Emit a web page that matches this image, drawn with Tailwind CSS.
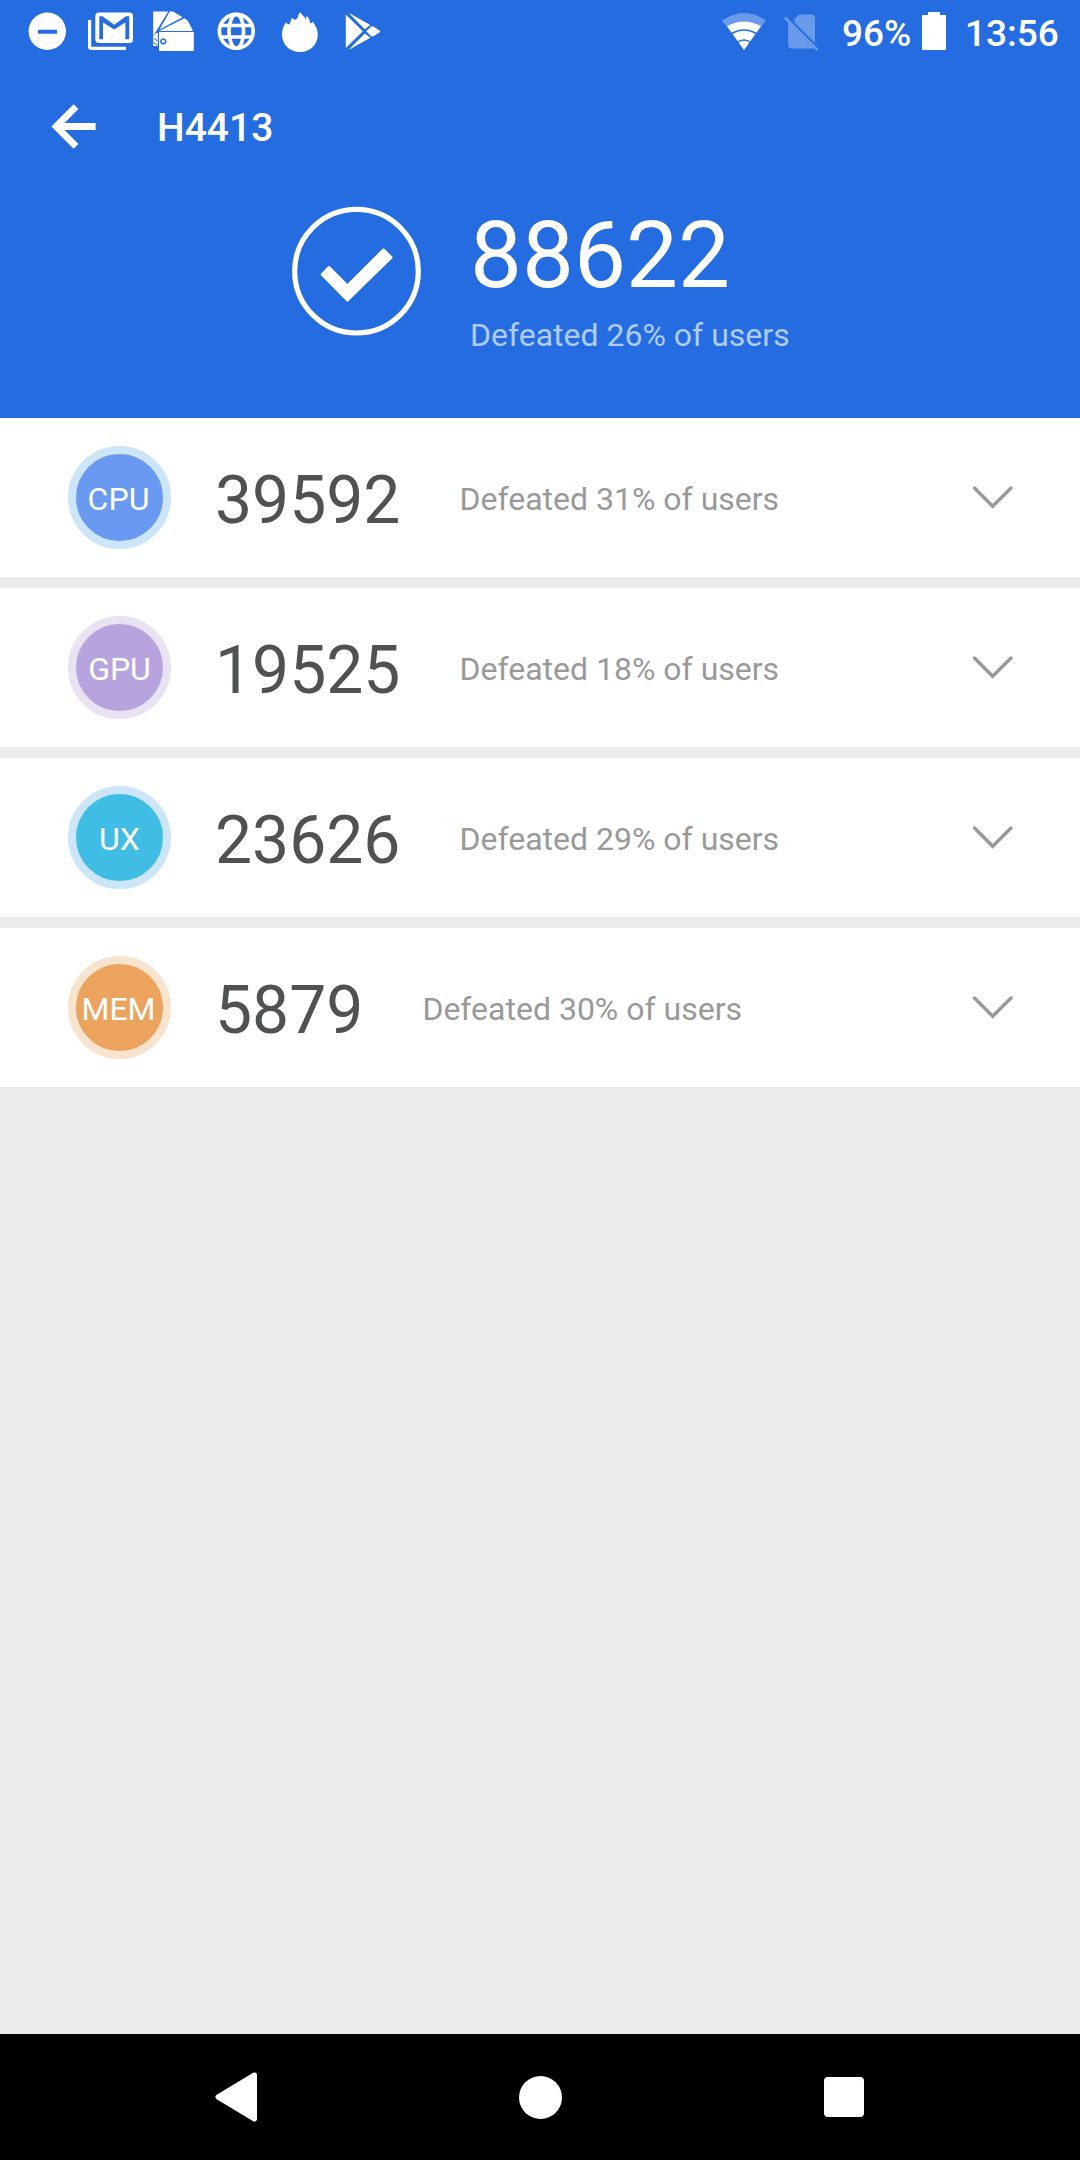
<!DOCTYPE html>
<html lang="en">
<head>
    <meta charset="UTF-8">
    <meta name="viewport" content="width=device-width, initial-scale=1.0">
    <title>H4413 - Benchmark</title>
    <script src="https://cdn.jsdelivr.net/npm/@tailwindcss/browser@4"></script>
</head>
<body class="bg-[#ebebeb] font-['Roboto',sans-serif]">
    <div class="w-[1080px] h-[2160px] flex flex-col overflow-hidden">
        <!-- Header -->
        <header class="h-[418px] shrink-0 bg-[#246ce0] text-white">
            <!-- Status bar -->
            <div class="h-16 flex items-center pl-7 pr-[21px]">
                <svg class="w-[38px] h-16" viewBox="28 0 38 64" fill="white">
                    <path fill-rule="evenodd" d="M47.3 12.6a18.7 18.7 0 1 0 0 37.4a18.7 18.7 0 0 0 0-37.4zM38 29.7h19v4H38z"/>
                </svg>
                <svg class="w-[46px] h-16 ml-[22px]" viewBox="88 0 46 64" fill="white">
                    <path d="M88 20h3.2v26.8H126V50H91.500Q88 50 88 46.500z"/>
                    <path fill-rule="evenodd" d="M99 12.500H129.500Q133 12.500 133 16V39.500Q133 43 129.500 43H99Q95.300 43 95.300 39.500V16Q95.300 12.500 99 12.500zM99.300 16.300V39.300H103V22.500L114.200 29.600L125.400 22.500V39.300H129.200V16.300H126L114.200 24.800L102.500 16.300z"/>
                </svg>
                <svg class="w-[42px] h-16 ml-[19px]" viewBox="153 0 42 64" fill="white">
                    <path d="M153.200 11.500H168.200L153.200 36z"/>
                    <path d="M169.800 11.500H173L182.500 17.200L159.500 29.500z"/>
                    <path d="M159.500 30.700L184.500 18.200L188 21L193 31H159.500z"/>
                    <path d="M153.200 36L156.500 32.800L157.800 33V46H153.200z"/>
                    <path fill-rule="evenodd" d="M159 32H193.800V51H159zM163.300 38.200a3.200 3.200 0 1 0 .01 0zM163.300 39.800a1.600 1.600 0 1 1-.01 0z"/>
                    <path d="M154 38.500L157.500 41M153.500 42.500L157.500 45" stroke="#246ce0" stroke-width="1"/>
                </svg>
                <svg class="w-[38px] h-16 ml-[22px]" viewBox="217 0 38 64" fill="none" stroke="white" stroke-width="3.700">
                    <circle cx="236.300" cy="31.300" r="16.900"/>
                    <ellipse cx="236.300" cy="31.300" rx="7.300" ry="16.900"/>
                    <path d="M221 25.500H251.600M221 37H251.600"/>
                </svg>
                <svg class="w-[37px] h-16 ml-[27px]" viewBox="282 0 37 64" fill="white">
                    <path d="M300 52C289 52 282 44 282 34.500C282 29 284 25 286.300 22.300C287 24 287.800 24.500 289.300 24.200C291 23.500 289.800 19.800 292.800 17.800C293.200 19.500 294.500 20.200 296 19.500C298.800 18 297.500 14.500 300.300 12C300.800 14.500 304.800 16 305.300 19C306.500 18.700 306.500 17 306.300 15.700C309.700 18 309.300 21 310.700 23.300C312 23.300 312.200 22.300 312.300 21.500C315.500 25 317.800 29.500 317.800 34.500C317.800 44 311 52 300 52z"/>
                </svg>
                <svg class="w-[36px] h-16 ml-[26px]" viewBox="345 0 36 64" fill="white">
                    <path d="M345.800 14.500L362.800 31.300L345.800 48z"/>
                    <path d="M348.500 12.700L370.300 25L364.800 29.200z"/>
                    <path d="M348.500 50L370.300 37.700L364.800 33.400z"/>
                    <path d="M366.200 31.300L371.500 26.200Q373.500 26 379.500 30.500Q380.500 31.300 379.500 32.200Q373.500 36.700 371.500 36.400z"/>
                </svg>

                <svg class="w-[46px] h-16 ml-auto" viewBox="721 0 46 64">
                    <path fill="#6b9aea" d="M722 20.500Q744 5.500 766 20.500L760.500 27.500Q744 15.500 727.500 27.500z"/>
                    <path fill="white" d="M727 26.300Q744 16.500 761 26.300L744 50z"/>
                    <path fill="none" stroke="#246ce0" stroke-width="1.500" d="M731 34Q744 26 757 34M737 42.500Q744 37.500 751 42.500"/>
                </svg>
                <svg class="w-[36px] h-16 ml-[17px]" viewBox="784 0 36 64">
                    <path fill="#6b9aea" d="M799 14.500H811.500Q815 14.500 815 18V43L794.500 22.500V19zM788.200 22L814 48.500H792Q788.200 48.500 788.200 44.500z"/>
                    <path stroke="#6b9aea" stroke-width="2.500" d="M784.800 17.500L817.500 50"/>
                </svg>
                <span class="ml-[22px] w-[68px] text-[37px] leading-none font-medium whitespace-nowrap relative top-[1px]">96%</span>
                <svg class="w-[24px] h-16 ml-[12px]" viewBox="922 0 24 64" fill="white">
                    <path d="M928 12H940V15H946V50H922V15H928z"/>
                </svg>
                <span class="ml-[19px] w-[94px] text-[37px] leading-none font-medium whitespace-nowrap relative top-[1px]">13:56</span>
            </div>

            <!-- App bar -->
            <div class="h-[126px] flex items-center pl-[51px]">
                <svg class="w-[46px] h-[46px]" viewBox="51 104 46 46" fill="none" stroke="white" stroke-width="6.800">
                    <path d="M95.600 126.500H57M76 106.700L56.200 126.500L76 146.300"/>
                </svg>
                <h1 class="ml-[60px] text-[39px] leading-none font-medium relative top-[1px]">H4413</h1>
            </div>

            <!-- Total score -->
            <div class="flex pl-[292px] pt-4">
                <svg class="w-[130px] h-[130px]" viewBox="292 206 130 130">
                    <circle cx="356.500" cy="271.200" r="61.800" fill="none" stroke="white" stroke-width="5.200"/>
                    <path fill="white" stroke="white" stroke-width="3" stroke-linejoin="round" d="M322.300 274.500L329 267.500L347.400 286L383.500 250L391 257.500L347.400 300z"/>
                </svg>
                <div class="ml-12">
                    <p class="text-[92.500px] leading-[100px]">88622</p>
                    <p class="text-[32px] leading-[40px] mt-[9px] text-[#b0ccf9]">Defeated 26% of users</p>
                </div>
            </div>
        </header>

        <!-- Category scores -->
        <main class="flex-1 flex flex-col gap-[11px]">
            <div class="h-[159px] bg-white flex items-center pl-[68px] pr-[66px]">
                <div class="size-[103px] rounded-full border-8 border-[#cce5f9] bg-[#6999f0] text-white text-[32px] flex items-center justify-center"><span class="relative top-[1px] right-[1px]">CPU</span></div>
                <p class="ml-11 text-[66px] leading-none text-[#50524f] relative top-[3px]">39592</p>
                <p class="ml-[59px] text-[32px] text-[#999999] relative top-[1px]">Defeated 31% of users</p>
                <svg class="w-[42px] h-[26px] ml-auto" viewBox="0 0 42 26" fill="none" stroke="#999999" stroke-width="3.500" stroke-linecap="round"><path d="M2.500 3L20.700 21.200L39 3"/></svg>
            </div>
            <div class="h-[159px] bg-white flex items-center pl-[68px] pr-[66px]">
                <div class="size-[103px] rounded-full border-8 border-[#e8e2f3] bg-[#b7a4de] text-white text-[32px] flex items-center justify-center"><span class="relative top-[1px]">GPU</span></div>
                <p class="ml-11 text-[66px] leading-none text-[#50524f] relative top-[3px]">19525</p>
                <p class="ml-[59px] text-[32px] text-[#999999] relative top-[1px]">Defeated 18% of users</p>
                <svg class="w-[42px] h-[26px] ml-auto" viewBox="0 0 42 26" fill="none" stroke="#999999" stroke-width="3.500" stroke-linecap="round"><path d="M2.500 3L20.700 21.200L39 3"/></svg>
            </div>
            <div class="h-[159px] bg-white flex items-center pl-[68px] pr-[66px]">
                <div class="size-[103px] rounded-full border-8 border-[#cce5f9] bg-[#3fbde4] text-white text-[32px] flex items-center justify-center"><span class="relative top-[1px]">UX</span></div>
                <p class="ml-11 text-[66px] leading-none text-[#50524f] relative top-[3px]">23626</p>
                <p class="ml-[59px] text-[32px] text-[#999999] relative top-[1px]">Defeated 29% of users</p>
                <svg class="w-[42px] h-[26px] ml-auto" viewBox="0 0 42 26" fill="none" stroke="#999999" stroke-width="3.500" stroke-linecap="round"><path d="M2.500 3L20.700 21.200L39 3"/></svg>
            </div>
            <div class="h-[159px] bg-white flex items-center pl-[68px] pr-[66px]">
                <div class="size-[103px] rounded-full border-8 border-[#f8e3ce] bg-[#eba35e] text-white text-[32px] flex items-center justify-center"><span class="relative top-[1px] right-[1px]">MEM</span></div>
                <p class="ml-11 text-[66px] leading-none text-[#50524f] relative top-[3px]">5879</p>
                <p class="ml-[59px] text-[32px] text-[#999999] relative top-[1px]">Defeated 30% of users</p>
                <svg class="w-[42px] h-[26px] ml-auto" viewBox="0 0 42 26" fill="none" stroke="#999999" stroke-width="3.500" stroke-linecap="round"><path d="M2.500 3L20.700 21.200L39 3"/></svg>
            </div>
        </main>

        <!-- Navigation bar -->
        <nav class="h-[126px] shrink-0 bg-black flex items-center justify-between pl-[214px] pr-[216px]">
            <svg class="w-[43px] h-[52px]" viewBox="0 0 43 52" fill="white" stroke="white" stroke-width="5" stroke-linejoin="round">
                <path d="M40.500 4L4 26L40.500 48z"/>
            </svg>
            <div class="size-[43px] rounded-full bg-white"></div>
            <div class="size-[40px] rounded-[4px] bg-white"></div>
        </nav>
    </div>
</body>
</html>
